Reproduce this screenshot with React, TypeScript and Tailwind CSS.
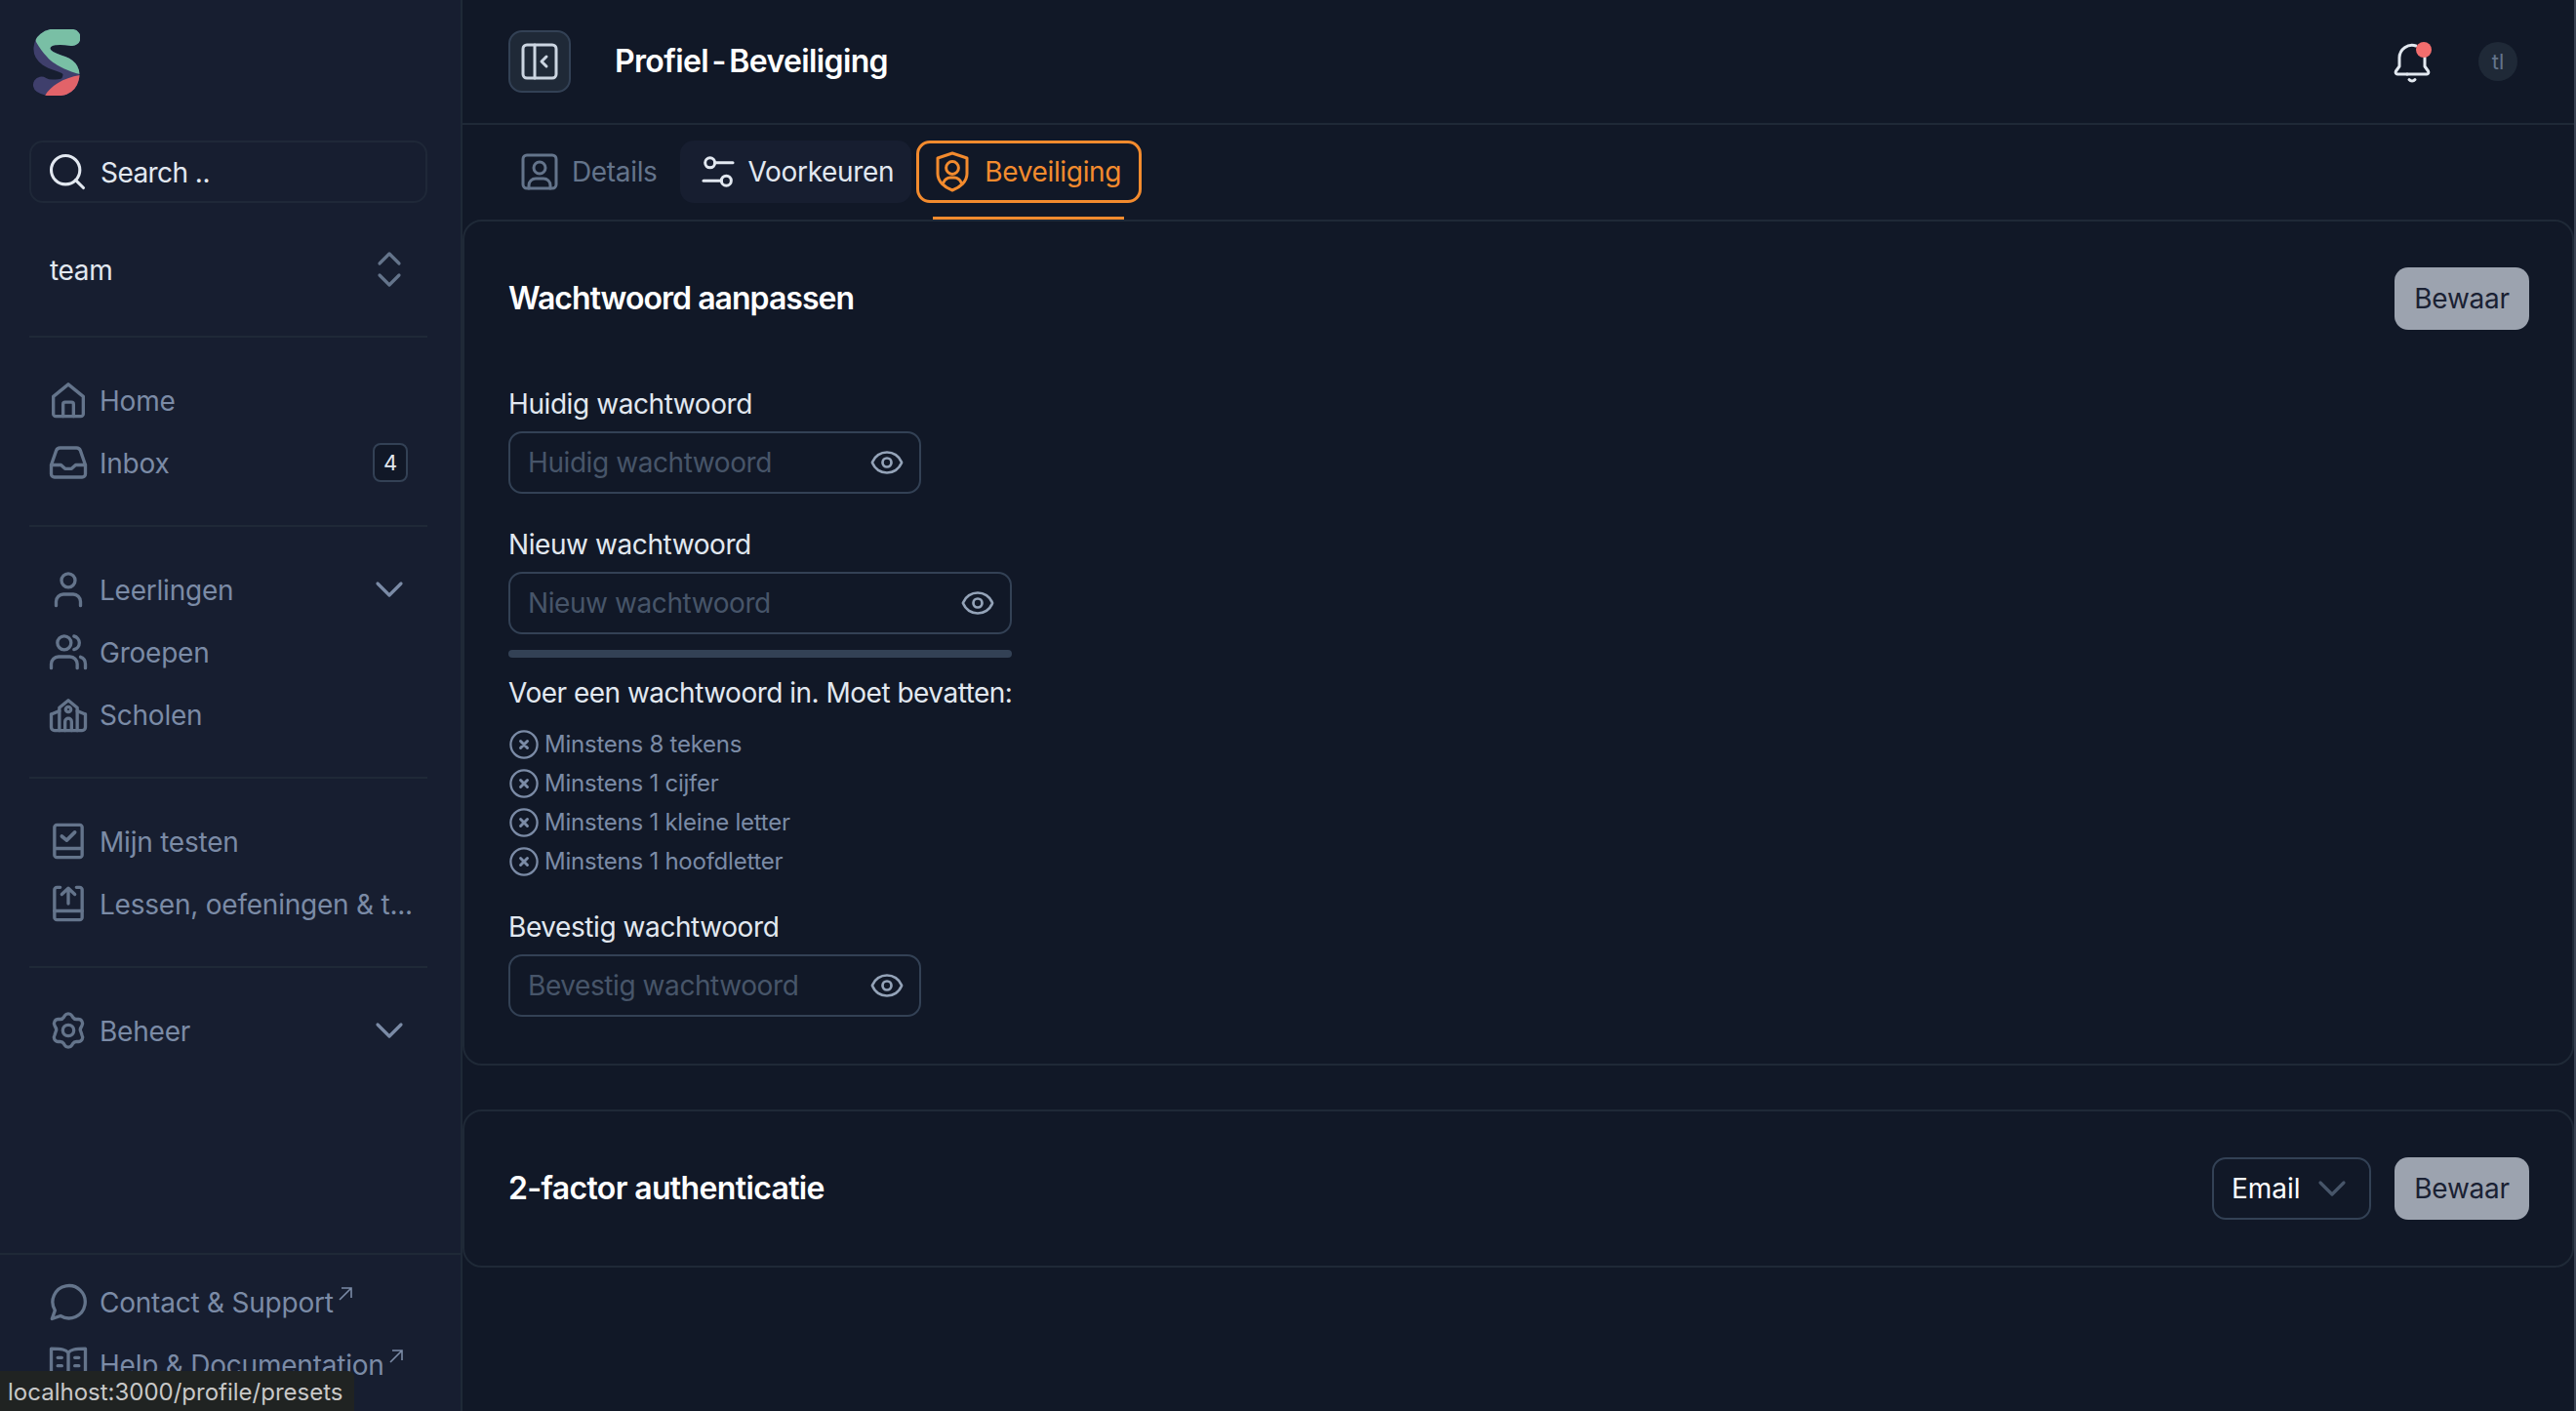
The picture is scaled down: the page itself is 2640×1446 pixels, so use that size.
import type { ReactNode } from "react";
import { ChevronDown, ChevronsUpDown, Eye, Search } from "lucide-react";

function Icon({ size = 40, stroke = 2, className = "", children }: { size?: number; stroke?: number; className?: string; children: ReactNode }) {
  return (
    <svg width={size} height={size} viewBox="0 0 24 24" fill="none" stroke="currentColor" strokeWidth={stroke} strokeLinecap="round" strokeLinejoin="round" className={className}>
      {children}
    </svg>
  );
}

function Logo() {
  const s = "M40 8.5C30 7 10 5 9 19C8 30 22 33 30 36C38 39 40 44 38.5 50C36 60 28 60 20 60C14 60 10 58 8.5 57";
  return (
    <svg width="48" height="68" viewBox="0 0 48 68" fill="none">
      <defs>
        <clipPath id="logo-green">
          <path d="M0 0H48V46C38 44 20 36 14 28C10 24 6 18 3 13Z" />
        </clipPath>
        <clipPath id="logo-red">
          <path d="M12 68C18 58 30 50 48 47V68Z" />
        </clipPath>
      </defs>
      <path d={s} stroke="#3f3f6c" strokeWidth="17" strokeLinecap="round" />
      <path d={s} stroke="#79bfa5" strokeWidth="17" strokeLinecap="round" clipPath="url(#logo-green)" />
      <path d={s} stroke="#e26369" strokeWidth="17" strokeLinecap="round" clipPath="url(#logo-red)" />
    </svg>
  );
}

const HomeIcon = () => (
  <Icon>
    <path d="M2.8 20.5V9.8L12 2.3L21.2 9.8V20.5A1.5 1.5 0 0 1 19.7 22H4.3A1.5 1.5 0 0 1 2.8 20.5Z" />
    <path d="M8.8 22V14.5A1.2 1.2 0 0 1 10 13.3H14A1.2 1.2 0 0 1 15.2 14.5V22" />
  </Icon>
);
const InboxIcon = () => (
  <Icon>
    <path d="M1.5 13.5L4.6 4.6A2.5 2.5 0 0 1 7 3H17A2.5 2.5 0 0 1 19.4 4.6L22.5 13.5V19A2 2 0 0 1 20.5 21H3.5A2 2 0 0 1 1.5 19Z" />
    <path d="M1.5 13.5H7.5L10 15.8H14L16.5 13.5H22.5" />
  </Icon>
);
const UserIcon = () => (
  <Icon>
    <circle cx="12" cy="6.5" r="4.2" />
    <path d="M4.5 22V19.5A4.5 4.5 0 0 1 9 15H15A4.5 4.5 0 0 1 19.5 19.5V22" />
  </Icon>
);
const UsersIcon = () => (
  <Icon>
    <circle cx="9.5" cy="6.5" r="4.2" />
    <path d="M1.5 22V19.5A4.5 4.5 0 0 1 6 15H13A4.5 4.5 0 0 1 17.5 19.5V22" />
    <path d="M15.5 2.4A4.2 4.2 0 0 1 15.5 10.6" />
    <path d="M19.5 15.2A4.5 4.5 0 0 1 22.5 19.5V22" />
  </Icon>
);
const SchoolIcon = () => (
  <Icon>
    <path d="M1.5 12V20A2 2 0 0 0 3.5 22H20.5A2 2 0 0 0 22.5 20V12" />
    <path d="M6.5 22V8L12 3.5L17.5 8V22" />
    <circle cx="12" cy="9" r="1.6" />
    <path d="M10 22V16.5A2 2 0 0 1 14 16.5V22" />
    <path d="M1.5 12L6.5 10M22.5 12L17.5 10" />
  </Icon>
);
const BookCheckIcon = () => (
  <Icon>
    <path d="M3.5 17V3.5A1.5 1.5 0 0 1 5 2H19A1.5 1.5 0 0 1 20.5 3.5V20.5A1.5 1.5 0 0 1 19 22H5A1.5 1.5 0 0 1 3.5 20.5V16.5H20.5" />
    <path d="M8 9L11 11.5L16 6.5" strokeWidth="2.2" />
  </Icon>
);
const BookUploadIcon = () => (
  <Icon>
    <path d="M7 2H5A1.5 1.5 0 0 0 3.5 3.5V20.5A1.5 1.5 0 0 0 5 22H19A1.5 1.5 0 0 0 20.5 20.5V3.5A1.5 1.5 0 0 0 19 2H17" />
    <path d="M3.5 16.5H20.5" />
    <path d="M12 12V2.8M8 6.3L12 2.5L16 6.3" />
  </Icon>
);
const GearIcon = () => (
  <Icon>
    <path d="M9.8 2.9A2.6 2.6 0 0 1 14.2 2.9L14.8 3.9A2.6 2.6 0 0 0 17 5.1L18.2 5.1A2.6 2.6 0 0 1 20.4 9L19.8 10.2A2.6 2.6 0 0 0 19.8 13L20.4 14.9A2.6 2.6 0 0 1 18.2 18.9L17 18.9A2.6 2.6 0 0 0 14.8 20.1L14.2 21.1A2.6 2.6 0 0 1 9.8 21.1L9.2 20.1A2.6 2.6 0 0 0 7 18.9L5.8 18.9A2.6 2.6 0 0 1 3.6 14.9L4.2 13A2.6 2.6 0 0 0 4.2 10.2L3.6 9A2.6 2.6 0 0 1 5.8 5.1L7 5.1A2.6 2.6 0 0 0 9.2 3.9Z" />
    <circle cx="12" cy="12" r="3.4" />
  </Icon>
);
const ChatIcon = () => (
  <Icon>
    <path d="M2 22.5L3.8 17.3A10 10 0 1 1 7.2 20.7Z" />
  </Icon>
);
const BookOpenIcon = () => (
  <Icon>
    <path d="M12 22V5C10.5 3 8 2.5 1.5 2.5V19.5C8 19.5 10.5 20 12 22C13.5 20 16 19.5 22.5 19.5V2.5C16 2.5 13.5 3 12 5" />
    <path d="M5.5 8H8M5.5 13H8M16 8H18.5M16 13H18.5" />
  </Icon>
);

function External() {
  return (
    <svg width="14" height="14" viewBox="0 0 14 14" fill="none" stroke="currentColor" strokeWidth="1.6" className="mb-[16px] ml-[5px] shrink-0">
      <path d="M1 13L13 1M3 1H13V11" />
    </svg>
  );
}

function NavRow({ icon, label, right, external }: { icon: ReactNode; label: string; right?: ReactNode; external?: boolean }) {
  return (
    <div className="flex h-[64px] items-center px-5 text-[#7b8ba6]">
      <div className="flex w-[40px] shrink-0 items-center justify-center text-[#64748b]">{icon}</div>
      <span className="ml-[12px] whitespace-nowrap pt-[2px] text-[28px] leading-[40px] tracking-[-0.008em]">{label}</span>
      {external && <External />}
      {right && <div className="ml-auto flex shrink-0 items-center">{right}</div>}
    </div>
  );
}

function Chevron() {
  return <ChevronDown size={48} strokeWidth={1.6} className="-mr-[5px] text-[#7b8ba6]" />;
}

function Divider() {
  return <div className="ml-[30px] mr-[34px] h-[2px] bg-[#1f2937]" />;
}

function NavGroup({ children }: { children: ReactNode }) {
  return <div className="ml-[30px] mr-[34px] py-8">{children}</div>;
}

function Sidebar() {
  return (
    <aside className="flex h-full w-[474px] shrink-0 flex-col border-r-2 border-[#1f2937] bg-[#171e30]">
      <div className="ml-[34px] mt-[30px] h-[68px]">
        <Logo />
      </div>
      <div className="ml-[30px] mr-[34px] mt-[46px] flex h-[64px] items-center rounded-[14px] border-2 border-[#1f2838] pl-[15px] text-[#e2e8f0]">
        <Search size={44} strokeWidth={1.7} className="shrink-0" />
        <span className="ml-[12px] pt-[2px] text-[28px] tracking-[-0.02em]">Search ..</span>
      </div>
      <div className="ml-[30px] mr-[34px] mt-[36px] mb-[36px] flex h-[64px] items-center pl-[21px] pr-[20px]">
        <span className="pt-[2px] text-[28px] tracking-[-0.012em] text-[#e2e8f0]">team</span>
        <ChevronsUpDown size={48} strokeWidth={1.6} className="-mr-[5px] ml-auto text-[#64748b]" />
      </div>
      <Divider />
      <NavGroup>
        <NavRow icon={<HomeIcon />} label="Home" />
        <NavRow
          icon={<InboxIcon />}
          label="Inbox"
          right={
            <span className="flex h-[40px] w-[36px] items-center justify-center rounded-[8px] border-2 border-[#334155] bg-[#111827] text-[22px] text-[#e2e8f0]">4</span>
          }
        />
      </NavGroup>
      <Divider />
      <NavGroup>
        <NavRow icon={<UserIcon />} label="Leerlingen" right={<Chevron />} />
        <NavRow icon={<UsersIcon />} label="Groepen" />
        <NavRow icon={<SchoolIcon />} label="Scholen" />
      </NavGroup>
      <Divider />
      <NavGroup>
        <NavRow icon={<BookCheckIcon />} label="Mijn testen" />
        <NavRow icon={<BookUploadIcon />} label="Lessen, oefeningen & t..." />
      </NavGroup>
      <Divider />
      <NavGroup>
        <NavRow icon={<GearIcon />} label="Beheer" right={<Chevron />} />
      </NavGroup>
      <div className="mt-auto border-t-2 border-[#1f2937] pb-4 pl-[30px] pr-[34px] pt-4">
        <NavRow icon={<ChatIcon />} label="Contact & Support" external />
        <NavRow icon={<BookOpenIcon />} label="Help & Documentation" external />
      </div>
    </aside>
  );
}

function Tab({ icon, label, variant, className }: { icon: ReactNode; label: string; variant: "muted" | "hover" | "active"; className: string }) {
  const cls =
    variant === "active"
      ? "border-[#f38b2e] text-[#f38b2e]"
      : variant === "hover"
        ? "border-transparent bg-[#171e30] text-[#e2e8f0]"
        : "border-transparent text-[#64748b]";
  return (
    <div className="relative">
      <div className={`flex h-[64px] items-center rounded-[14px] border-[3px] ${cls} ${className}`}>
        {icon}
        <span className="text-[28px] leading-[40px] tracking-[-0.012em]">{label}</span>
      </div>
      {variant === "active" && <div className="absolute -bottom-[17px] left-[17px] right-[18px] h-[3px] bg-[#f38b2e]" />}
    </div>
  );
}

function Field({ label, width }: { label: string; width: string }) {
  return (
    <div>
      <div className="text-[28px] leading-[40px] tracking-[-0.015em] text-[#e2e8f0]">{label}</div>
      <div className={`mt-2 flex h-[64px] items-center justify-between rounded-[14px] border-2 border-[#334155] pl-[18px] pr-[15px] ${width}`}>
        <span className="text-[28px] tracking-[-0.015em] text-[#475569]">{label}</span>
        <Eye size={36} strokeWidth={1.8} className="text-[#94a3b8]" />
      </div>
    </div>
  );
}

function Rule({ label }: { label: string }) {
  return (
    <div className="flex h-[40px] items-center gap-[5px] text-[#7b8ba6]">
      <Icon size={32} stroke={1.7}>
        <circle cx="12" cy="12" r="10.2" />
        <path d="M9.4 9.4L14.6 14.6M14.6 9.4L9.4 14.6" strokeWidth="2.2" />
      </Icon>
      <span className="text-[24px] tracking-[-0.01em]">{label}</span>
    </div>
  );
}

function SaveButton() {
  return <button className="flex h-[64px] w-[138px] items-center justify-center rounded-[14px] bg-[#9ca3af] text-[28px] tracking-[-0.01em] text-[#1a2133]">Bewaar</button>;
}

export default function App() {
  return (
    <div className="relative flex h-[1446px] w-[2640px] overflow-hidden bg-[#111827] [font-family:Inter,sans-serif]">
      <Sidebar />
      <main className="flex h-full min-w-0 flex-1 flex-col border-r-2 border-[#3a4252]">
        <header className="flex h-[128px] shrink-0 items-center border-b-2 border-[#1f2937] pl-[47px] pr-[58px]">
          <div className="flex h-[64px] w-[64px] items-center justify-center rounded-[14px] border-2 border-[#334155] bg-[#1f2937] text-[#cbd5e1]">
            <Icon size={48} stroke={1.5}>
              <rect x="3.5" y="3.5" width="17" height="17" rx="2" />
              <path d="M9.5 3.5V20.5" />
              <path d="M15.5 9.5L13 12L15.5 14.5" />
            </Icon>
          </div>
          <h1 className="ml-[45px] text-[32px] font-semibold tracking-[-0.02em] text-white [word-spacing:-0.12em]">Profiel - Beveiliging</h1>
          <div className="relative ml-auto text-[#e2e8f0]">
            <Icon size={48} stroke={1.5}>
              <path d="M9.5 18.5H4.5A1 1 0 0 1 3.7 17L5.5 14.5V10A6.5 6.5 0 0 1 14 4" />
              <path d="M18.5 10V14.5L20.3 17A1 1 0 0 1 19.5 18.5H9.5" />
              <path d="M10.5 21.3A2 2 0 0 0 13.5 21.3" />
            </Icon>
            <span className="absolute right-[4px] top-[4px] h-[16px] w-[16px] rounded-full bg-[#f26d6d]" />
          </div>
          <div className="ml-[44px] flex h-[40px] w-[40px] items-center justify-center rounded-full bg-[#1f2937] text-[22px] text-[#64748b]">tl</div>
        </header>
        <div className="flex h-[97px] shrink-0 items-start gap-[5px] pl-[36px] pt-4">
          <Tab
            variant="muted"
            label="Details"
            className="gap-[9px] pl-[16px] pr-[15px]"
            icon={
              <Icon size={48} stroke={1.5}>
                <rect x="3.5" y="3.5" width="17" height="17" rx="2" />
                <circle cx="12" cy="10" r="3" />
                <path d="M6.5 20.5V19A3.5 3.5 0 0 1 10 15.5H14A3.5 3.5 0 0 1 17.5 19V20.5" />
              </Icon>
            }
          />
          <Tab
            variant="hover"
            label="Voorkeuren"
            className="gap-[11px] pl-[16px] pr-[15px]"
            icon={
              <Icon size={40} stroke={1.8}>
                <circle cx="7" cy="6.5" r="3" />
                <path d="M10 6.5H21" />
                <circle cx="17" cy="17.5" r="3" />
                <path d="M14 17.5H3" />
              </Icon>
            }
          />
          <Tab
            variant="active"
            label="Beveiliging"
            className="gap-[9px] pl-[10px] pr-[18px]"
            icon={
              <Icon size={48} stroke={1.5}>
                <path d="M12 2.5L19.5 5V13C19.5 17 16 20 12 21.5C8 20 4.5 17 4.5 13V5Z" />
                <circle cx="12" cy="10" r="3.2" />
                <path d="M7.5 17.5A4 4 0 0 1 11 15H13A4 4 0 0 1 16.5 17.5" />
              </Icon>
            }
          />
        </div>
        <section className="rounded-[20px] border-2 border-[#1f2937] pb-[48px] pl-[45px] pr-[44px] pt-[47px]">
          <div className="flex h-[64px] items-center justify-between">
            <h2 className="text-[32px] font-semibold tracking-[-0.03em] text-white">Wachtwoord aanpassen</h2>
            <SaveButton />
          </div>
          <div className="mt-[56px]">
            <Field label="Huidig wachtwoord" width="w-[423px]" />
          </div>
          <div className="mt-[32px]">
            <Field label="Nieuw wachtwoord" width="w-[516px]" />
          </div>
          <div className="mt-[16px] h-[8px] w-[516px] rounded-full bg-[#334155]" />
          <div className="mt-[16px] text-[28px] leading-[40px] tracking-[-0.018em] text-[#e2e8f0]">Voer een wachtwoord in. Moet bevatten:</div>
          <div className="mt-[13px]">
            <Rule label="Minstens 8 tekens" />
            <Rule label="Minstens 1 cijfer" />
            <Rule label="Minstens 1 kleine letter" />
            <Rule label="Minstens 1 hoofdletter" />
          </div>
          <div className="mt-[27px]">
            <Field label="Bevestig wachtwoord" width="w-[423px]" />
          </div>
        </section>
        <section className="mt-[45px] flex items-center rounded-[20px] border-2 border-[#1f2937] py-[47px] pl-[45px] pr-[44px]">
          <h2 className="text-[32px] font-semibold tracking-[-0.02em] text-white">2-factor authenticatie</h2>
          <div className="ml-auto flex h-[64px] w-[163px] items-center justify-between rounded-[14px] border-2 border-[#334155] pl-[18px] pr-[14px]">
            <span className="text-[28px] text-white">Email</span>
            <ChevronDown size={48} strokeWidth={1.6} className="text-[#475569]" />
          </div>
          <div className="ml-[24px]">
            <SaveButton />
          </div>
        </section>
      </main>
      <div className="absolute bottom-0 left-0 flex h-[41px] w-[363px] items-center rounded-tr-[6px] bg-[#202322] pl-[8px] pt-[2px] text-[24px] text-[#c8c8c8]">
        localhost:3000/profile/presets
      </div>
    </div>
  );
}
